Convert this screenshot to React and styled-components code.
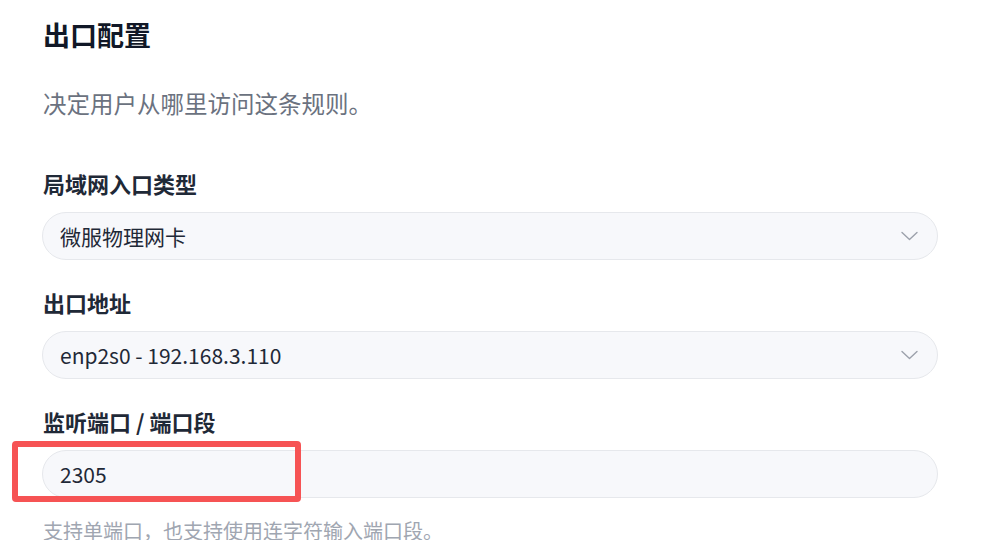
import React from "react";
import styled, { createGlobalStyle } from "styled-components";

const Global = createGlobalStyle`
  html, body { margin: 0; padding: 0; background: #ffffff; }
  body { font-family: "Noto Sans CJK SC", "Noto Sans", sans-serif; }
  * { box-sizing: border-box; }
`;

const Page = styled.div`
  width: 1005px;
  height: 540px;
  overflow: hidden;
  padding: 17px 0 0 42px;
`;

const Section = styled.section`
  width: 896px;
  display: flex;
  flex-direction: column;
`;

const Title = styled.h2`
  margin: 0;
  font-size: 27px;
  line-height: 36px;
  font-weight: 700;
  color: #111827;
  padding-left: 1px;
`;

const Subtitle = styled.p`
  margin: 34px 0 49px;
  font-size: 23.5px;
  line-height: 32px;
  color: #6b7280;
  padding-left: 1px;
`;

const Fields = styled.div`
  display: flex;
  flex-direction: column;
  gap: 27px;
`;

const Field = styled.div`
  display: flex;
  flex-direction: column;
`;

const Label = styled.label`
  font-size: 22px;
  line-height: 30px;
  font-weight: 700;
  color: #1f2937;
  margin-bottom: 14px;
  padding-left: 1px;
`;

const Control = styled.div`
  position: relative;
  height: 48px;
  border: 1px solid #e6e8ec;
  border-radius: 24px;
  background: #f7f8fb;
  display: flex;
  align-items: center;
  justify-content: space-between;
  padding: 0 19px 0 17px;
  font-size: 21px;
  color: #1f2937;
`;

const Value = styled.span`
  line-height: 1;
`;

const Chevron = styled.svg`
  width: 17px;
  height: 10px;
  flex: none;
`;

const Highlight = styled.div`
  position: absolute;
  left: -31px;
  top: -10px;
  width: 289px;
  height: 61px;
  border: 6px solid #f65354;
  border-radius: 4px;
  pointer-events: none;
`;

const Help = styled.p`
  margin: 18px 0 0;
  font-size: 20px;
  line-height: 30px;
  color: #a0a6b1;
  padding-left: 1px;
`;

const Arrow = () => (
  <Chevron viewBox="0 0 17 10" fill="none">
    <path d="M1 1.5 L8.5 8.5 L16 1.5" stroke="#9ca1ab" strokeWidth="1.4" strokeLinecap="round" strokeLinejoin="round" />
  </Chevron>
);

export default function App() {
  return (
    <>
      <Global />
      <Page>
        <Section>
          <Title>出口配置</Title>
          <Subtitle>决定用户从哪里访问这条规则。</Subtitle>
          <Fields>
            <Field>
              <Label>局域网入口类型</Label>
              <Control>
                <Value>微服物理网卡</Value>
                <Arrow />
              </Control>
            </Field>
            <Field>
              <Label>出口地址</Label>
              <Control>
                <Value>enp2s0 - 192.168.3.110</Value>
                <Arrow />
              </Control>
            </Field>
            <Field>
              <Label>监听端口 / 端口段</Label>
              <Control>
                <Value>2305</Value>
                <Highlight />
              </Control>
              <Help>支持单端口，也支持使用连字符输入端口段。</Help>
            </Field>
          </Fields>
        </Section>
      </Page>
    </>
  );
}
